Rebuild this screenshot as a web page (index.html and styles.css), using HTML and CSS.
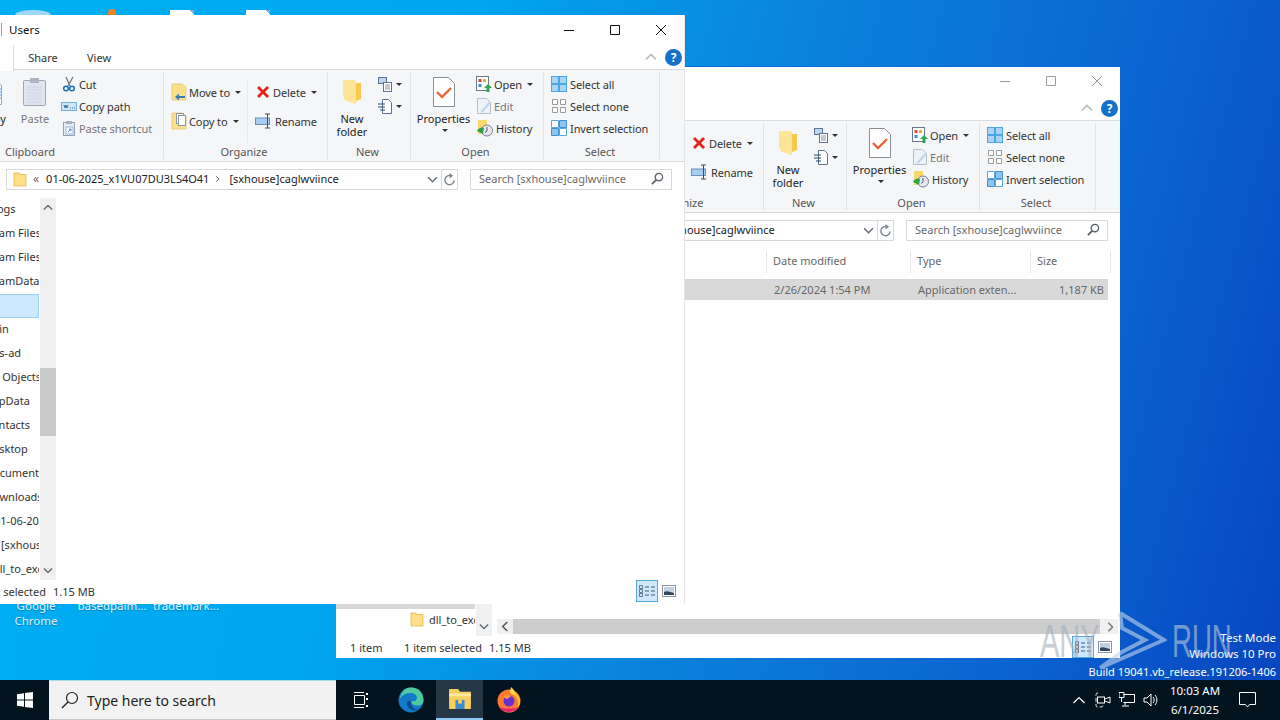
FILE: index.html
```html
<!DOCTYPE html>
<html lang="en">
<head>
<meta charset="utf-8">
<title>Desktop</title>
<link rel="stylesheet" href="styles.css">
</head>
<body>
<svg class="defs" width="0" height="0" aria-hidden="true">
  <symbol id="i-folder" viewBox="0 0 16 16"><path d="M2 2h5l1 1.500h6V15H2z" fill="#ffe08a" stroke="#e0b84e" stroke-width=".8"/></symbol>
  <symbol id="i-bigfolder" viewBox="0 0 22 28"><path d="M2 2h11l2 3 5 0v16l-5 2v3L4 22 2 17z" fill="#fcdc7c"/><path d="M13 2l2 3 5 0v16l-5 2z" fill="#f7c94e"/><path d="M2 2h11l2 3v21L4 22 2 17z" fill="#fee498"/></symbol>
  <symbol id="i-cut" viewBox="0 0 16 16"><path d="M5 1l4 9M12 1l-5 9" stroke="#6b7077" stroke-width="1.200" fill="none"/><circle cx="5" cy="12.500" r="2.300" fill="none" stroke="#1c6fb6" stroke-width="1.500"/><circle cx="11" cy="12.500" r="2.300" fill="none" stroke="#1c6fb6" stroke-width="1.500"/></symbol>
  <symbol id="i-copypath" viewBox="0 0 16 16"><rect x=".5" y="4.500" width="15" height="8" fill="#cfe6f8" stroke="#6fb1e4"/><path d="M3 7l1 3 1-3 1 3 1-3M9 10h1M11 10h1M13 10h1" stroke="#2c6aa8" fill="none" stroke-width=".9"/></symbol>
  <symbol id="i-pasteshort" viewBox="0 0 16 16"><rect x="2.500" y="2.500" width="11" height="13" fill="#e7ebf2" stroke="#9aa3b3"/><rect x="5" y="1" width="6" height="3" fill="#aab2c0"/><rect x="5" y="7" width="7" height="7" fill="#fff" stroke="#6f9ccc" stroke-width=".7"/><path d="M7 12l3-3M8 9h2v2" stroke="#4f86c0" fill="none"/></symbol>
  <symbol id="i-paste" viewBox="0 0 26 30"><rect x="1.500" y="3.500" width="22" height="25" rx="1" fill="#dfe4ef" stroke="#9ea6b5"/><rect x="8" y="1" width="9" height="5" fill="#aeb5c2"/><path d="M5 10h15M5 13h15M5 16h15M5 19h15M5 22h15M5 25h15" stroke="#cdd5e6"/></symbol>
  <symbol id="i-copy" viewBox="0 0 24 30"><path d="M3.500 3.500h12l5 5v19h-17z" fill="#fff" stroke="#9ea6b5"/><path d="M6 12h14M6 15h14M6 18h14M6 21h14" stroke="#4f9ae0"/></symbol>
  <symbol id="i-move" viewBox="0 0 16 18"><path d="M1 1h10l4 3v13H1z" fill="#fbe08b" stroke="#e5c25f" stroke-width=".7"/><path d="M14 13H8V10.500L4 14l4 3.500V15h6z" fill="#3a7bb8"/></symbol>
  <symbol id="i-copyto" viewBox="0 0 16 18"><path d="M1 1h10l4 3v13H1z" fill="#fbe08b" stroke="#e5c25f" stroke-width=".7"/><rect x="5.500" y="1.500" width="7" height="10" fill="#fff" stroke="#8d98a8"/><rect x="7.500" y="3.500" width="7" height="10" fill="#fff" stroke="#8d98a8"/></symbol>
  <symbol id="i-delete" viewBox="0 0 16 16"><path d="M2 4l2-2 4 4 4-4 2 2-4 4 4 4-2 2-4-4-4 4-2-2 4-4z" fill="#e0251b"/></symbol>
  <symbol id="i-rename" viewBox="0 0 18 16"><rect x=".5" y="5" width="14" height="6.500" fill="#a9cdf0" stroke="#6d8fb5"/><path d="M12.500 1v14M10 1h5M10 15h5" stroke="#444b55" fill="none"/></symbol>
  <symbol id="i-newitem" viewBox="0 0 16 16"><rect x="1.500" y="1.500" width="8" height="6" fill="#bcd6f0" stroke="#5d7391"/><rect x="6.500" y="6.500" width="8" height="9" fill="#fff" stroke="#5d7391"/><path d="M8 9h5M8 11h5M8 13h5" stroke="#8b95a3"/></symbol>
  <symbol id="i-easy" viewBox="0 0 16 16"><path d="M5.500 1.500h6l3 3v11h-9z" fill="#fff" stroke="#5d7391"/><path d="M1 6h7M1 9h7M3 12h5" stroke="#2b4a6b"/></symbol>
  <symbol id="i-props" viewBox="0 0 22 30"><path d="M.5 .5h15l6 6v23H.5z" fill="#fff" stroke="#8a8f96"/><path d="M4 15l5 5 9-9" stroke="#e8663a" stroke-width="2.400" fill="none"/></symbol>
  <symbol id="i-open" viewBox="0 0 16 16"><rect x=".5" y=".5" width="12" height="14" fill="#fff" stroke="#6a7a8c"/><rect x="2.500" y="3" width="3" height="3" fill="#d94a3a"/><rect x="7" y="3" width="3" height="3" fill="#e0b03a"/><rect x="2.500" y="8" width="3" height="3" fill="#3a8fd9"/><path d="M12 8l4 4h-2.500v4h-3v-4H8z" fill="#2fa84f"/></symbol>
  <symbol id="i-edit" viewBox="0 0 16 18"><path d="M1.500 1.500h9l4 4v11h-13z" fill="#eef3f9" stroke="#b6bfcc"/><path d="M5 14l8-9 1.500 1.500-8 9H5z" fill="#bcd4ee"/></symbol>
  <symbol id="i-history" viewBox="0 0 18 17"><path d="M2 0h9v14H2z" fill="#f8d76c"/><circle cx="11" cy="10.500" r="5.500" fill="#e8e8ee" stroke="#76808c"/><path d="M11 7v4l-2 1.500" stroke="#51606f" fill="none"/><path d="M1 11a5 5 0 0 1 7-3l-1 6z" fill="#2ea34a"/></symbol>
  <symbol id="i-all" viewBox="0 0 16 16"><path d="M0 0h16v16H0z" fill="#4ea6e6"/><path d="M1 1h6v6H1zM9 1h6v6H9zM1 9h6v6H1zM9 9h6v6H9z" fill="#a8d5f5"/></symbol>
  <symbol id="i-none" viewBox="0 0 16 16"><path d="M1.500 1.500h5v5h-5zM9.500 1.500h5v5h-5zM1.500 9.500h5v5h-5zM9.500 9.500h5v5h-5z" fill="#fff" stroke="#9b9b9b"/></symbol>
  <symbol id="i-invert" viewBox="0 0 16 16"><path d="M.5 .5h7v7h-7zM8.500 8.500h7v7h-7z" fill="#fff" stroke="#5aa5e0"/><path d="M8.500 .5h7v7h-7zM.5 8.500h7v7h-7z" fill="#8cc5ee" stroke="#3f8fd2"/></symbol>
  <symbol id="i-details" viewBox="0 0 18 16"><path d="M1.500 2.500h3v3h-3zM1.500 6.500h3v3h-3zM1.500 10.500h3v3h-3z" fill="none" stroke="#4f5b68" stroke-width=".8"/><path d="M7 4h4M13 4h4M7 8h4M13 8h4M7 12h4M13 12h4" stroke="#4f5b68"/></symbol>
  <symbol id="i-thumb" viewBox="0 0 14 12"><rect x=".5" y=".5" width="13" height="11" fill="#fff" stroke="#8a96a3"/><rect x="2" y="2" width="10" height="8" fill="#c3d2e0"/><path d="M2 7c3-2 6 0 10 1v2H2z" fill="#34475c"/></symbol>
  <symbol id="i-search" viewBox="0 0 14 14"><circle cx="8.500" cy="5.500" r="4" fill="none" stroke="#55606b" stroke-width="1.400"/><path d="M5.500 8.500L1 13" stroke="#55606b" stroke-width="2"/></symbol>
  <symbol id="i-refresh" viewBox="0 0 14 14"><path d="M9 3A5 5 0 1 0 12 8" fill="none" stroke="#7b8794" stroke-width="1.500"/><path d="M7 0v6l4-3z" fill="#7b8794"/></symbol>
  <symbol id="i-chev-down" viewBox="0 0 12 8"><path d="M1 1.500l5 5 5-5" fill="none" stroke="#5e6a75" stroke-width="1.600"/></symbol>
  <symbol id="i-chev-up" viewBox="0 0 12 8"><path d="M1 6.500l5-5 5 5" fill="none" stroke="#5e6a75" stroke-width="1.600"/></symbol>
  <symbol id="i-chev-left" viewBox="0 0 8 12"><path d="M6.500 1l-5 5 5 5" fill="none" stroke="#4e5660" stroke-width="1.600"/></symbol>
  <symbol id="i-chev-right" viewBox="0 0 8 12"><path d="M1.500 1l5 5-5 5" fill="none" stroke="#6a727c" stroke-width="1.600"/></symbol>
</svg>

<main class="desktop">
  <div class="peek peek-arc"></div>
  <div class="peek peek-dot"></div>
  <div class="peek peek-doc peek-doc-a"></div>
  <div class="peek peek-doc peek-doc-b"></div>
  <div class="deskicon deskicon-a">Google<br>Chrome</div>
  <div class="deskicon deskicon-b">basedpalm...</div>
  <div class="deskicon deskicon-c">trademark...</div>

  <section class="window back">
    <header class="titlebar">
      <span class="title">[sxhouse]caglwviince</span>
      <div class="controls">
        <span class="ctl"><svg width="10" height="10"><path d="M0 5.500h10" stroke="currentColor"/></svg></span>
        <span class="ctl"><svg width="10" height="10"><path d="M.5 .5h9v9h-9z" fill="none" stroke="currentColor"/></svg></span>
        <span class="ctl"><svg width="12" height="12"><path d="M1 1l10 10M11 1L1 11" stroke="currentColor"/></svg></span>
      </div>
    </header>
    <nav class="tabs">
      <span class="tab tab-file"></span>
      <span class="tab tab-home"></span>
      <span class="tab tab-share">Share</span>
      <span class="tab tab-view">View</span>
      <svg class="tab-collapse" width="12" height="8"><use href="#i-chev-up"/></svg>
      <span class="help">?</span>
    </nav>
    <div class="ribbon">
      <div class="group g-clip">
        <div class="gbody">
          <div class="big big-pin"></div>
          <div class="big big-copy"><svg class="bigicon" width="24" height="30"><use href="#i-copy"/></svg><span>Copy</span></div>
          <div class="big big-paste muted"><svg class="bigicon" width="26" height="30"><use href="#i-paste"/></svg><span>Paste</span></div>
          <div class="rows rows-clip">
            <div class="row"><svg width="16" height="16"><use href="#i-cut"/></svg>Cut</div>
            <div class="row"><svg width="16" height="16"><use href="#i-copypath"/></svg>Copy path</div>
            <div class="row muted"><svg width="16" height="16"><use href="#i-pasteshort"/></svg>Paste shortcut</div>
          </div>
        </div>
        <div class="glabel">Clipboard</div>
      </div>
      <div class="group g-org">
        <div class="gbody">
          <div class="orgcol orgcol-a">
            <div class="row"><svg width="16" height="18"><use href="#i-move"/></svg>Move to<i class="caret"></i></div>
            <div class="row"><svg width="16" height="18"><use href="#i-copyto"/></svg>Copy to<i class="caret"></i></div>
          </div>
          <div class="orgcol orgcol-b">
            <div class="row"><svg width="16" height="16"><use href="#i-delete"/></svg>Delete<i class="caret"></i></div>
            <div class="row"><svg width="18" height="16"><use href="#i-rename"/></svg>Rename</div>
          </div>
        </div>
        <div class="glabel">Organize</div>
      </div>
      <div class="group g-new">
        <div class="gbody">
          <div class="big big-new"><svg class="bigicon" width="22" height="28"><use href="#i-bigfolder"/></svg><span>New<br>folder</span></div>
          <div class="rows">
            <div class="row"><svg width="16" height="16"><use href="#i-newitem"/></svg><i class="caret caret-tight"></i></div>
            <div class="row"><svg width="16" height="16"><use href="#i-easy"/></svg><i class="caret caret-tight"></i></div>
          </div>
        </div>
        <div class="glabel">New</div>
      </div>
      <div class="group g-open">
        <div class="gbody">
          <div class="big big-props"><svg class="bigicon" width="22" height="30"><use href="#i-props"/></svg><span>Properties</span><i class="caret caret-below"></i></div>
          <div class="rows rows-open">
            <div class="row"><svg width="16" height="16"><use href="#i-open"/></svg>Open<i class="caret"></i></div>
            <div class="row muted"><svg width="16" height="18"><use href="#i-edit"/></svg>Edit</div>
            <div class="row"><svg width="18" height="17"><use href="#i-history"/></svg>History</div>
          </div>
        </div>
        <div class="glabel">Open</div>
      </div>
      <div class="group g-select">
        <div class="gbody">
          <div class="rows">
            <div class="row"><svg width="16" height="16"><use href="#i-all"/></svg>Select all</div>
            <div class="row"><svg width="16" height="16"><use href="#i-none"/></svg>Select none</div>
            <div class="row"><svg width="16" height="16"><use href="#i-invert"/></svg>Invert selection</div>
          </div>
        </div>
        <div class="glabel">Select</div>
      </div>
    </div>
    <div class="addressbar">
      <div class="address">
        <svg width="16" height="16"><use href="#i-folder"/></svg>
        <span class="crumb-more">«</span>
        <span class="crumb">01-06-2025_x1VU07DU3LS4O41</span>
        <svg class="crumb-sep" width="5" height="8"><use href="#i-chev-right"/></svg>
        <span class="crumb">[sxhouse]caglwviince</span>
        <svg class="addr-drop" width="11" height="7"><use href="#i-chev-down"/></svg>
      </div>
      <div class="refresh"><svg width="13" height="13"><use href="#i-refresh"/></svg></div>
      <div class="search"><span>Search [sxhouse]caglwviince</span><svg width="13" height="13"><use href="#i-search"/></svg></div>
    </div>
    <div class="content">
      <div class="navpane">
        <ul class="tree">
          <li class="lv1">PerfLogs</li>
          <li class="lv1">Program Files</li>
          <li class="lv1">Program Files (x86)</li>
          <li class="lv1">ProgramData</li>
          <li class="lv1">Users</li>
          <li class="lv2">admin</li>
          <li class="lv2b">vbs-ad</li>
          <li class="lv3">3D Objects</li>
          <li class="lv3">AppData</li>
          <li class="lv3">Contacts</li>
          <li class="lv3">Desktop</li>
          <li class="lv3">Documents</li>
          <li class="lv3">Downloads</li>
          <li class="lv4">01-06-2025_x1VU07</li>
          <li class="lv5 inactive-sel">[sxhouse]caglwviince</li>
          <li class="lv6"><svg class="tree-folder" width="16" height="16"><use href="#i-folder"/></svg>dll_to_execute</li>
        </ul>
        <div class="vscroll">
          <svg width="10" height="7"><use href="#i-chev-up"/></svg>
          <div class="vtrack"><div class="vthumb"></div></div>
          <svg width="10" height="7"><use href="#i-chev-down"/></svg>
        </div>
      </div>
      <div class="pane">
        <div class="thead">
          <span class="th th-name"></span>
          <span class="th th-date">Date modified</span>
          <span class="th th-type">Type</span>
          <span class="th th-size">Size</span>
        </div>
        <div class="trow">
          <span class="td-name"></span>
          <span class="td-date">2/26/2024 1:54 PM</span>
          <span class="td-type">Application exten...</span>
          <span class="td-size">1,187 KB</span>
        </div>
        <div class="hscroll">
          <svg width="8" height="11"><use href="#i-chev-left"/></svg>
          <div class="hthumb"></div>
          <svg width="7" height="10"><use href="#i-chev-right"/></svg>
        </div>
      </div>
    </div>
    <footer class="status">
      <span class="st-count">1 item</span>
      <span class="st-sel">1 item selected</span>
      <span class="st-size">1.15 MB</span>
      <span class="view-btn"><svg width="18" height="16"><use href="#i-details"/></svg></span>
      <svg class="view-thumb" width="14" height="12"><use href="#i-thumb"/></svg>
    </footer>
  </section>

  <section class="window front">
    <header class="titlebar">
      <i class="title-sep"></i>
      <span class="title">Users</span>
      <div class="controls">
        <span class="ctl"><svg width="10" height="10"><path d="M0 5.500h10" stroke="currentColor"/></svg></span>
        <span class="ctl"><svg width="10" height="10"><path d="M.5 .5h9v9h-9z" fill="none" stroke="currentColor"/></svg></span>
        <span class="ctl"><svg width="12" height="12"><path d="M1 1l10 10M11 1L1 11" stroke="currentColor"/></svg></span>
      </div>
    </header>
    <nav class="tabs">
      <span class="tab tab-file"></span>
      <span class="tab tab-home"></span>
      <span class="tab tab-share">Share</span>
      <span class="tab tab-view">View</span>
      <svg class="tab-collapse" width="12" height="8"><use href="#i-chev-up"/></svg>
      <span class="help">?</span>
    </nav>
    <div class="ribbon">
      <div class="group g-clip">
        <div class="gbody">
          <div class="big big-pin"></div>
          <div class="big big-copy"><svg class="bigicon" width="24" height="30"><use href="#i-copy"/></svg><span>Copy</span></div>
          <div class="big big-paste muted"><svg class="bigicon" width="26" height="30"><use href="#i-paste"/></svg><span>Paste</span></div>
          <div class="rows rows-clip">
            <div class="row"><svg width="16" height="16"><use href="#i-cut"/></svg>Cut</div>
            <div class="row"><svg width="16" height="16"><use href="#i-copypath"/></svg>Copy path</div>
            <div class="row muted"><svg width="16" height="16"><use href="#i-pasteshort"/></svg>Paste shortcut</div>
          </div>
        </div>
        <div class="glabel">Clipboard</div>
      </div>
      <div class="group g-org">
        <div class="gbody">
          <div class="orgcol orgcol-a">
            <div class="row"><svg width="16" height="18"><use href="#i-move"/></svg>Move to<i class="caret"></i></div>
            <div class="row"><svg width="16" height="18"><use href="#i-copyto"/></svg>Copy to<i class="caret"></i></div>
          </div>
          <div class="orgcol orgcol-b">
            <div class="row"><svg width="16" height="16"><use href="#i-delete"/></svg>Delete<i class="caret"></i></div>
            <div class="row"><svg width="18" height="16"><use href="#i-rename"/></svg>Rename</div>
          </div>
        </div>
        <div class="glabel">Organize</div>
      </div>
      <div class="group g-new">
        <div class="gbody">
          <div class="big big-new"><svg class="bigicon" width="22" height="28"><use href="#i-bigfolder"/></svg><span>New<br>folder</span></div>
          <div class="rows">
            <div class="row"><svg width="16" height="16"><use href="#i-newitem"/></svg><i class="caret caret-tight"></i></div>
            <div class="row"><svg width="16" height="16"><use href="#i-easy"/></svg><i class="caret caret-tight"></i></div>
          </div>
        </div>
        <div class="glabel">New</div>
      </div>
      <div class="group g-open">
        <div class="gbody">
          <div class="big big-props"><svg class="bigicon" width="22" height="30"><use href="#i-props"/></svg><span>Properties</span><i class="caret caret-below"></i></div>
          <div class="rows rows-open">
            <div class="row"><svg width="16" height="16"><use href="#i-open"/></svg>Open<i class="caret"></i></div>
            <div class="row muted"><svg width="16" height="18"><use href="#i-edit"/></svg>Edit</div>
            <div class="row"><svg width="18" height="17"><use href="#i-history"/></svg>History</div>
          </div>
        </div>
        <div class="glabel">Open</div>
      </div>
      <div class="group g-select">
        <div class="gbody">
          <div class="rows">
            <div class="row"><svg width="16" height="16"><use href="#i-all"/></svg>Select all</div>
            <div class="row"><svg width="16" height="16"><use href="#i-none"/></svg>Select none</div>
            <div class="row"><svg width="16" height="16"><use href="#i-invert"/></svg>Invert selection</div>
          </div>
        </div>
        <div class="glabel">Select</div>
      </div>
    </div>
    <div class="addressbar">
      <div class="address">
        <svg width="16" height="16"><use href="#i-folder"/></svg>
        <span class="crumb-more">«</span>
        <span class="crumb">01-06-2025_x1VU07DU3LS4O41</span>
        <svg class="crumb-sep" width="5" height="8"><use href="#i-chev-right"/></svg>
        <span class="crumb">[sxhouse]caglwviince</span>
        <svg class="addr-drop" width="11" height="7"><use href="#i-chev-down"/></svg>
      </div>
      <div class="refresh"><svg width="13" height="13"><use href="#i-refresh"/></svg></div>
      <div class="search"><span>Search [sxhouse]caglwviince</span><svg width="13" height="13"><use href="#i-search"/></svg></div>
    </div>
    <div class="content">
      <div class="navpane">
        <ul class="tree">
          <li class="lv1">PerfLogs</li>
          <li class="lv1">Program Files</li>
          <li class="lv1">Program Files (x86)</li>
          <li class="lv1">ProgramData</li>
          <li class="lv1 active-sel">Users</li>
          <li class="lv2">admin</li>
          <li class="lv2b">vbs-ad</li>
          <li class="lv3">3D Objects</li>
          <li class="lv3">AppData</li>
          <li class="lv3">Contacts</li>
          <li class="lv3">Desktop</li>
          <li class="lv3">Documents</li>
          <li class="lv3">Downloads</li>
          <li class="lv4">01-06-2025_x1VU07</li>
          <li class="lv5">[sxhouse]caglwviince</li>
          <li class="lv6"><svg class="tree-folder" width="16" height="16"><use href="#i-folder"/></svg>dll_to_execute</li>
        </ul>
        <div class="vscroll">
          <svg width="10" height="7"><use href="#i-chev-up"/></svg>
          <div class="vtrack"><div class="vthumb"></div></div>
          <svg width="10" height="7"><use href="#i-chev-down"/></svg>
        </div>
      </div>
      <div class="pane"></div>
    </div>
    <footer class="status">
      <span class="st-count">1 item</span>
      <span class="st-sel">1 item selected</span>
      <span class="st-size">1.15 MB</span>
      <span class="view-btn"><svg width="18" height="16"><use href="#i-details"/></svg></span>
      <svg class="view-thumb" width="14" height="12"><use href="#i-thumb"/></svg>
    </footer>
  </section>

  <div class="winmark">
    <span>Test Mode</span>
    <span>Windows 10 Pro</span>
    <span class="winmark-build">Build 19041.vb_release.191206-1406</span>
  </div>

  <div class="anyrun">
    <span class="any">ANY</span>
    <svg class="play" width="72" height="62" viewBox="0 0 72 62"><path d="M25 3L69 30 5 58M25 3L27 18 50 30 27 42 5 58" fill="none" stroke="#c4d6ea" stroke-width="4"/></svg>
    <span class="run">RUN</span>
  </div>
</main>

<footer class="taskbar">
  <div class="start"><svg width="16" height="16" viewBox="0 0 16 16"><path d="M0 2.200L7 1.200V7.500H0zM8 1L16 0V7.500H8zM0 8.500H7V14.800L0 13.800zM8 8.500H16V16L8 15z" fill="#fff"/></svg></div>
  <div class="searchbox">
    <svg width="18" height="18" viewBox="0 0 18 18"><circle cx="11" cy="7" r="5.500" fill="none" stroke="#222" stroke-width="1.200"/><path d="M7 11l-6 6" stroke="#222" stroke-width="1.400"/></svg>
    <span>Type here to search</span>
  </div>
  <div class="tb-btn tb-wide"><svg width="16" height="16" viewBox="0 0 16 16"><path d="M1 .5h10M1 15.500h10M1.500 3.500h10v9h-10z" fill="none" stroke="#fff"/><path d="M14 1v2M14 6v2M14 13v2" stroke="#fff" stroke-width="2"/></svg></div>
  <div class="tb-btn tb-wide"><svg width="26" height="26" viewBox="0 0 26 26"><circle cx="13" cy="13" r="12.500" fill="#1379c9"/><path d="M13 .5C21 .5 25.500 6 25.500 13c0 4-3 5.500-6 5.500-3.500 0-6.500-1.500-6.500-4.500 3 1 6-.5 6-3 0-3-3-5-7-5-5 0-9 3-10.500 7C2.500 5 7 .5 13 .5z" fill="#4fc9a0"/><path d="M13 14c-4-1-5 3-3 6 2 3 7 5 11 2-3 1-8 0-8-8z" fill="#0f4a8c"/></svg></div>
  <div class="tb-btn tb-active"><svg width="24" height="20" viewBox="0 0 24 22"><path d="M0 0h10l2 3h12v19H0z" fill="#f7cf5f"/><path d="M0 5h24v3H0z" fill="#fbe7a2"/><path d="M7 12h10v10H7z" fill="#3f8ec9"/><path d="M10 12h4v4h-4z" fill="#f7cf5f"/></svg></div>
  <div class="tb-btn tb-ff"><svg width="24" height="26" viewBox="0 0 24 26"><circle cx="12" cy="14" r="11.500" fill="#ff7a30"/><path d="M12 3c6 1 11 5 11 11 0 3-1 5-2 6 1-6-2-12-9-17z" fill="#ffc02e"/><path d="M14 0c3 3 5 5 5 9l-6-3z" fill="#ffd84a"/><path d="M2 20c3 6 15 7 20 0-6 2-14 2-20 0z" fill="#e3266d"/><circle cx="12" cy="14" r="5.500" fill="#6b2fd0"/><path d="M7 9c3-2 6-1 7 1-2 0-3 1-3 2-2 0-4-1-4-3z" fill="#ff9a3c"/></svg></div>
  <div class="tray">
    <svg class="tray-chev" width="12" height="8" viewBox="0 0 12 8"><path d="M.5 7l5.500-5.500L11.500 7" fill="none" stroke="#fff" stroke-width="1.200"/></svg>
    <svg class="tray-ico" width="16" height="16" viewBox="0 0 16 16"><path d="M3 1c-2 0-2 1-2 3v8c0 2 0 3 2 3h3c2 0 2-1 2-3" fill="none" stroke="#fff" stroke-width=".9" stroke-dasharray="4 2"/><rect x="2.500" y="5" width="7" height="6" fill="none" stroke="#fff"/><path d="M10 7l5-2v6l-5-2" fill="none" stroke="#fff"/></svg>
    <svg class="tray-ico" width="16" height="16" viewBox="0 0 16 16"><path d="M4.500 2.500h11v8h-11M0 .5h5v5H0zM6 10.500v3M3 14h7M2.500 6v4" fill="none" stroke="#fff"/></svg>
    <svg class="tray-ico" width="16" height="16" viewBox="0 0 16 16"><path d="M1 6h3l4-4v12l-4-4H1zM10 5c1.500 1.500 1.500 4.500 0 6M12 3c2.500 3 2.500 7 0 10" fill="none" stroke="#fff"/></svg>
    <div class="clock"><span>10:03 AM</span><span>6/1/2025</span></div>
    <svg class="tray-note" width="17" height="16" viewBox="0 0 17 16"><path d="M.5 .5h16v12h-6l-2 2.500-2-2.500h-6z" fill="none" stroke="#fff"/></svg>
  </div>
</footer>
</body>
</html>
```

FILE: styles.css
```css
* { box-sizing: border-box; }
html, body { margin: 0; padding: 0; width: 1280px; height: 720px; overflow: hidden; }
body { font-family: "Noto Sans", "Open Sans", sans-serif; font-size: 11px; color: #222; }
.defs { position: absolute; }
svg { display: block; flex: none; }

.desktop {
  position: relative; width: 1280px; height: 680px; overflow: hidden;
  background: linear-gradient(105deg, #00b0f2 0%, #00a6f0 32%, #0a84dc 55%, #0a62d0 82%, #0746c0 100%);
}

.peek { position: absolute; }
.peek-arc { left: 15px; top: 10px; width: 36px; height: 10px; border-radius: 50% 50% 0 0; background: #9fd6f6; }
.peek-dot { left: 108px; top: 9px; width: 8px; height: 10px; border-radius: 4px 4px 0 0; background: #f58220; }
.peek-doc { top: 10px; width: 24px; height: 10px; background: linear-gradient(225deg, #7fb0dc 0 3px, #fff 3px); }
.peek-doc-a { left: 170px; }
.peek-doc-b { left: 246px; }

.deskicon {
  position: absolute; top: 598px; width: 76px; text-align: center; line-height: 15px;
  font-size: 11.5px; color: #dff3ff; text-shadow: 0 1px 1px rgba(0,0,0,.25);
}
.deskicon-a { left: -2px; }
.deskicon-b { left: 74px; }
.deskicon-c { left: 148px; }

.window { position: absolute; isolation: isolate; display: flex; flex-direction: column; background: #fff; overflow: hidden; }
.front { left: -100px; top: 15px; width: 785px; height: 589px; border-right: 1px solid #e6e6e6; }
.back { left: 336px; top: 66px; width: 784px; height: 592px; }
.back::before { content: ""; position: absolute; left: 0; right: 0; top: 0; height: 1px; background: #0a6bd0; }

.titlebar { flex: 0 0 29px; display: flex; align-items: center; position: relative; }
.title-sep { position: absolute; left: 101px; top: 8px; width: 1px; height: 13px; background: #9a9a9a; }
.title { padding-left: 109px; font-size: 11.5px; color: #111; }
.controls { margin-left: auto; display: flex; color: #111; }
.back .controls { color: #9a9a9a; }
.ctl { width: 46px; height: 29px; display: flex; align-items: center; justify-content: center; }

.tabs { flex: 0 0 25px; display: flex; align-items: center; position: relative; padding-top: 1px; }
.tab { height: 24px; line-height: 26px; text-align: center; color: #333; }
.tab-file { width: 58px; }
.tab-home { width: 56px; background: #fff; border-right: 1px solid #dadbdc; position: relative; z-index: 1; height: 26px; margin-bottom: -2px; }
.tab-share { width: 58px; }
.tab-view { width: 54px; }
.tab-collapse { margin-left: auto; margin-right: 2px; opacity: .45; }
.help {
  width: 17px; height: 17px; margin: 0 2px 0 6px; border-radius: 50%; background: #1470c8; color: #fff;
  font-weight: 700; font-size: 12px; line-height: 17px; text-align: center;
}

.ribbon {
  flex: 0 0 93px; display: flex; background: #f5f6f7;
  border-top: 1px solid #dadbdc; border-bottom: 1px solid #dadbdc;
}
.group { display: flex; flex-direction: column; padding-top: 3px; position: relative; }
.group::after { content: ""; position: absolute; right: 0; top: 2px; bottom: 2px; width: 1px; background: #e2e3e5; }
.g-clip { width: 264px; }
.g-org { width: 164px; }
.g-new { width: 83px; }
.g-open { width: 133px; }
.g-select { width: 116px; }
.gbody { flex: 1; display: flex; }
.glabel { height: 18px; line-height: 18px; text-align: center; color: #555; padding-right: 4px; }

.big { display: flex; flex-direction: column; align-items: center; padding-top: 4px; line-height: 13px; text-align: center; }
.bigicon { height: 30px; margin-bottom: 5px; }
.big-pin { width: 72px; }
.big-copy, .big-paste { width: 42px; }
.big-new { width: 48px; margin-right: 1px; }
.big-props { width: 65px; }
.rows-clip { margin-left: 5px; }
.rows-open { margin-left: 0; }
.row { height: 22px; display: flex; align-items: center; gap: 2px; white-space: nowrap; color: #333; letter-spacing: -.1px; }
.muted, .muted.row { color: #777; }
.g-select .rows { margin-left: 7px; }
.g-select .row { gap: 3px; }

.g-org .gbody { padding: 8px 0 0 7px; }
.orgcol { display: flex; flex-direction: column; gap: 7px; }
.orgcol-a { width: 77px; border-right: 1px solid #e6e7e9; }
.orgcol-b { margin-left: 7px; }
.caret { display: block; width: 0; height: 0; margin-left: 3px; border: 3px solid transparent; border-top: 3.500px solid #333; border-bottom: 0; }
.caret-tight { margin-left: 1px; }
.caret-below { margin-top: 4px; }

.addressbar { flex: 0 0 36px; display: flex; align-items: flex-start; padding: 7px 0 0 106px; }
.address, .refresh, .search { height: 21px; border: 1px solid #d9d9d9; display: flex; align-items: center; }
.address { width: 435px; padding: 0 0 2px 5px; border-right: 0; color: #222; }
.crumb-more { margin: 0 7px 0 5px; color: #666; font-size: 12px; }
.crumb-sep { margin: 0 9px 0 6px; }
.addr-drop { margin-left: auto; margin-right: 3px; margin-top: 2px; }
.refresh { width: 17px; justify-content: center; }
.search { width: 202px; margin-left: 12px; padding: 0 7px 2px 8px; color: #6a6a6a; justify-content: space-between; }

.content { flex: 1; display: flex; min-height: 0; }
.navpane { flex: 0 0 156px; display: flex; }
.tree { flex: 0 0 139px; margin: 0 1px 0 0; padding: 0; list-style: none; overflow: hidden; }
.tree li { height: 24px; padding-bottom: 4px; white-space: nowrap; overflow: hidden; display: flex; align-items: center; color: #333; }
.tree .lv1 { padding-left: 70px; }
.tree .lv2 { padding-left: 76px; }
.tree .lv2b { padding-left: 87px; }
.tree .lv3 { padding-left: 85px; }
.tree .lv4 { padding-left: 94px; }
.tree .lv5 { padding-left: 101px; }
.tree .lv6 { padding-left: 73px; }
.tree-folder { margin-right: 4px; }
.tree .active-sel { background: #cde8ff; border: 1px solid #99d1ff; }
.tree .inactive-sel { background: #d9d9d9; }
.vscroll { flex: 0 0 16px; background: #f0f0f0; display: flex; flex-direction: column; align-items: center; padding: 6px 0; }
.vtrack { flex: 1; width: 16px; margin: 6px 0; position: relative; }
.vthumb { position: absolute; left: 0; right: 0; top: 151px; height: 68px; background: #c9c9c9; }

.pane { flex: 1; display: flex; flex-direction: column; min-width: 0; color: #666; }
.thead { flex: 0 0 22px; margin-top: 2px; display: flex; align-items: center; }
.th { height: 22px; line-height: 20px; padding-left: 6px; border-right: 1px solid #e5e5e5; color: #666; }
.th-name { width: 275px; padding: 0; }
.th-date { width: 144px; }
.th-type { width: 120px; }
.th-size { width: 80px; }
.trow {
  flex: 0 0 21px; margin: 6px 12px 0 9px; display: flex; align-items: center;
  background: #d9d9d9; color: #666;
}
.td-name { width: 273px; }
.td-date { width: 144px; }
.td-type { width: 110px; }
.td-size { margin-left: auto; padding-right: 4px; }
.hscroll {
  flex: 0 0 15px; margin: auto 2px 2px 5px; display: flex; align-items: center;
  background: #f0f0f0; padding: 0 4px;
}
.hthumb { flex: 1; height: 15px; background: #cdcdcd; margin: 0 7px 0 4px; }

.status { flex: 0 0 22px; display: flex; align-items: center; padding: 0 8px 0 14px; background: #fff; color: #333; white-space: nowrap; }
.front .status { flex-basis: 24px; padding-bottom: 2px; }
.st-count { width: 54px; }
.st-sel { width: 85px; }
.view-btn {
  margin-left: auto; width: 22px; height: 22px; display: flex; align-items: center; justify-content: center;
  background: #cde8ff; border: 1px solid #58a6d6;
}
.view-thumb { margin-left: 4px; }

.winmark {
  position: absolute; right: 4px; top: 630px; display: flex; flex-direction: column; align-items: flex-end;
  color: #fff; font-size: 11.5px; line-height: 16px;
}
.winmark-build { margin-top: 2px; font-size: 11px; }
.anyrun { position: absolute; left: 1040px; top: 610px; width: 200px; height: 62px; opacity: .6; }
.any, .run {
  position: absolute; top: 8px; font-family: "Liberation Sans", sans-serif; font-size: 46px; line-height: 46px;
  transform-origin: left top; color: #bcc8d6;
}
.any { left: 0; transform: scaleX(.63); color: #a4b0be; }
.run { left: 132px; transform: scaleX(.6); }
.play { position: absolute; left: 55px; top: 0; }

.taskbar { height: 40px; display: flex; background: #04141f; }
.start { width: 49px; display: flex; align-items: center; justify-content: center; }
.searchbox {
  width: 287px; height: 40px; display: flex; align-items: center; gap: 8px; padding-left: 12px;
  background: #f2f2f2; border-top: 1px solid #a9dbe8; border-bottom: 1px solid #c8c8c8; color: #222; font-size: 14px;
}
.tb-btn { display: flex; align-items: center; justify-content: center; }
.tb-wide { width: 50px; }
.tb-active { background: #263845; border-bottom: 2px solid #8ec8f0; width: 47px; }
.tb-ff { width: 52px; }
.tray { margin-left: auto; display: flex; align-items: center; color: #fff; }
.tray-chev { margin-right: 6px; }
.tray-ico { margin: 0 4px; }
.clock { width: 60px; margin: 0 14px 0 2px; display: flex; flex-direction: column; align-items: center; font-size: 11.5px; line-height: 19px; }
.tray-note { margin-right: 24px; }
```
